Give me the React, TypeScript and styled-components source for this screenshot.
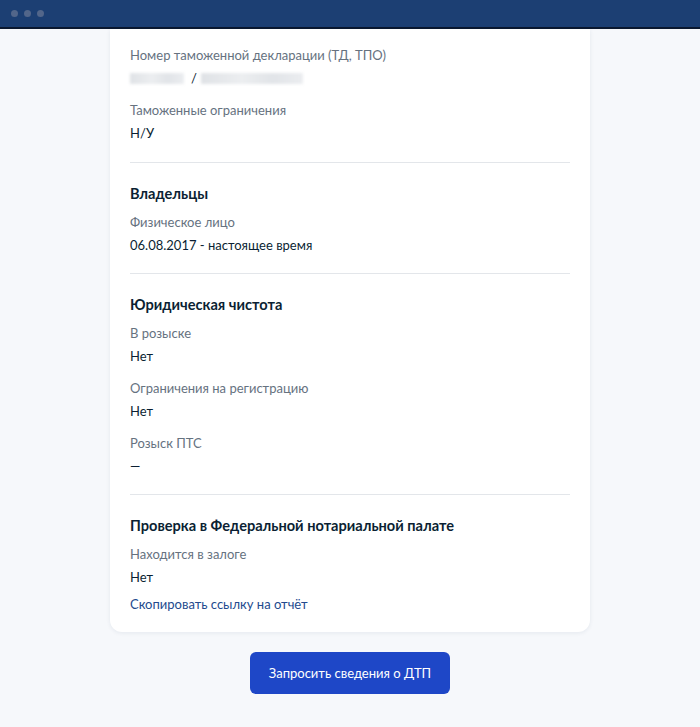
import React from "react";
import styled, { createGlobalStyle } from "styled-components";

const Global = createGlobalStyle`
  html, body { margin: 0; padding: 0; background: #f5f7fb; }
  body { font-family: Lato, "Noto Sans", sans-serif; -webkit-font-smoothing: antialiased; }
`;

const Page = styled.div`
  width: 700px;
  height: 727px;
  display: flex;
  flex-direction: column;
  background: #f6f8fb;
  overflow: hidden;
`;

const TopBar = styled.div`
  height: 27px;
  flex: none;
  background: #1c3f73;
  border-bottom: 2px solid #0a1830;
  display: flex;
  align-items: center;
  gap: 6px;
  padding-left: 11px;
`;

const Dot = styled.span`
  width: 7px;
  height: 7px;
  border-radius: 50%;
  background: #52668a;
  filter: blur(0.6px);
`;

const Main = styled.div`
  display: flex;
  flex-direction: column;
  align-items: center;
`;

const Card = styled.div`
  width: 480px;
  box-sizing: border-box;
  background: #ffffff;
  border-radius: 0 0 12px 12px;
  box-shadow: 0 1px 4px rgba(30, 50, 90, 0.08);
  padding: 0 20px;
`;

const Section = styled.div<{ $first?: boolean; $last?: boolean }>`
  padding: ${(p) => (p.$first ? "16px 0 17px" : "19px 0 16px")};
  border-bottom: ${(p) => (p.$last ? "none" : "1px solid #e3e6ea")};
  display: flex;
  flex-direction: column;
  gap: 10px;
`;

const Heading = styled.div`
  font-size: 14.6px;
  font-weight: 700;
  line-height: 24px;
  color: #0b1f33;
  margin-bottom: -4px;
`;

const Field = styled.div`
  display: flex;
  flex-direction: column;
`;

const Label = styled.div`
  font-size: 13px;
  line-height: 20px;
  color: #66727f;
`;

const Value = styled.div`
  font-size: 13px;
  line-height: 24px;
  margin-top: 1px;
  color: #0b1f33;
  display: flex;
  align-items: center;
`;

const Blur = styled.span<{ $w: number }>`
  display: inline-block;
  width: ${(p) => p.$w}px;
  height: 11px;
  background: linear-gradient(90deg, #dfe2e6, #eceef0 40%, #e1e4e8 70%, #ebedf0);
  filter: blur(1.5px);
`;

const Slash = styled.span`
  margin: 0 4px 0 7px;
  font-size: 13px;
`;

const Link = styled.a`
  font-size: 13px;
  line-height: 24px;
  color: #234a8e;
  text-decoration: none;
  margin-top: -7px;
`;

const Button = styled.button`
  margin-top: 20px;
  width: 200px;
  height: 42px;
  border: none;
  border-radius: 6px;
  background: #1e47c7;
  color: #ffffff;
  font-family: Lato, "Noto Sans", sans-serif;
  font-size: 13px;
  cursor: pointer;
`;

export default function App() {
  return (
    <>
      <Global />
      <Page>
        <TopBar>
          <Dot />
          <Dot />
          <Dot />
        </TopBar>
        <Main>
          <Card>
            <Section $first>
              <Field>
                <Label>Номер таможенной декларации (ТД, ТПО)</Label>
                <Value>
                  <Blur $w={54} />
                  <Slash>/</Slash>
                  <Blur $w={102} />
                </Value>
              </Field>
              <Field>
                <Label>Таможенные ограничения</Label>
                <Value>Н/У</Value>
              </Field>
            </Section>
            <Section>
              <Heading>Владельцы</Heading>
              <Field>
                <Label>Физическое лицо</Label>
                <Value>06.08.2017 - настоящее время</Value>
              </Field>
            </Section>
            <Section>
              <Heading>Юридическая чистота</Heading>
              <Field>
                <Label>В розыске</Label>
                <Value>Нет</Value>
              </Field>
              <Field>
                <Label>Ограничения на регистрацию</Label>
                <Value>Нет</Value>
              </Field>
              <Field>
                <Label>Розыск ПТС</Label>
                <Value>—</Value>
              </Field>
            </Section>
            <Section $last>
              <Heading>Проверка в Федеральной нотариальной палате</Heading>
              <Field>
                <Label>Находится в залоге</Label>
                <Value>Нет</Value>
              </Field>
              <Link href="#">Скопировать ссылку на отчёт</Link>
            </Section>
          </Card>
          <Button>Запросить сведения о ДТП</Button>
        </Main>
      </Page>
    </>
  );
}
